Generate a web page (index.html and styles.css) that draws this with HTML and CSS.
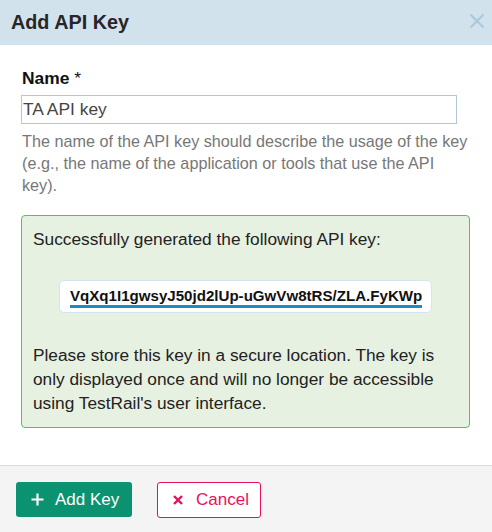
FILE: index.html
```html
<!DOCTYPE html>
<html>
<head>
<meta charset="utf-8">
<link rel="stylesheet" href="styles.css">
</head>
<body>
<div class="dialog">
  <div class="header">
    <h1 class="title">Add API Key</h1>
    <span class="close" aria-label="Close">
      <svg width="16" height="16" viewBox="0 0 16 16"><path d="M1.5 1.5 L14.5 14.5 M14.5 1.5 L1.5 14.5" stroke="#aac8dc" stroke-width="2" fill="none"/></svg>
    </span>
  </div>
  <div class="content">
    <label class="label">Name <span class="req">*</span></label>
    <div class="input">TA API key</div>
    <p class="help">The name of the API key should describe the usage of the key (e.g., the name of the application or tools that use the API key).</p>
    <div class="success">
      <p class="msg">Successfully generated the following API key:</p>
      <div class="keybox"><div class="keyfield"><span class="key">VqXq1I1gwsyJ50jd2lUp-uGwVw8tRS/ZLA.FyKWpTx9</span></div></div>
      <p class="msg">Please store this key in a secure location. The key is only displayed once and will no longer be accessible using TestRail's user interface.</p>
    </div>
  </div>
  <div class="footer">
    <button class="btn btn-add">
      <svg width="13" height="13" viewBox="0 0 13 13"><path d="M6.5 0.5 V12.5 M0.5 6.5 H12.5" stroke="#fff" stroke-width="2.2" fill="none"/></svg>
      <span>Add Key</span>
    </button>
    <button class="btn btn-cancel">
      <svg width="10" height="10" viewBox="0 0 10 10"><path d="M1 1 L9 9 M9 1 L1 9" stroke="#e5115c" stroke-width="2.4" fill="none"/></svg>
      <span>Cancel</span>
    </button>
  </div>
</div>
</body>
</html>
```

FILE: styles.css
```css
* { box-sizing: border-box; }
html, body { margin: 0; padding: 0; background: #fff; }
body {
  font-family: "Liberation Sans", Arial, sans-serif;
  color: #222;
  width: 492px;
  height: 532px;
  overflow: hidden;
}
.dialog {
  display: flex;
  flex-direction: column;
  height: 532px;
}
.header {
  height: 45px;
  background: #d2e2ed;
  display: flex;
  align-items: center;
  justify-content: space-between;
  padding: 0 7px 1px 11px;
}
.title {
  margin: 0;
  font-size: 19.8px;
  font-weight: bold;
  color: #262626;
}
.close { display: flex; width: 16px; height: 16px; margin-top: -2px; }
.content {
  flex: 1;
  padding: 22px 22px 0 22px;
}
.label {
  display: block;
  font-weight: bold;
  font-size: 17.4px;
  line-height: 22px;
  color: #111;
}
.req { font-weight: normal; }
.input {
  margin: 6px 13px 0 -1px;
  height: 29px;
  border: 1px solid #b2c8d6;
  font-size: 17.4px;
  line-height: 27px;
  padding: 0 0 0 1px;
  color: #444;
}
.help {
  margin: 6px 0 0 0;
  font-size: 16.2px;
  line-height: 22px;
  color: #777;
}
.success {
  margin: 19px 0 0 -1px;
  border: 1px solid #57c058;
  border-radius: 4px;
  background: #e7f1e1;
  padding: 11px 11px 12px 11px;
}
.msg {
  margin: 0;
  font-size: 17.3px;
  line-height: 24px;
  color: #222;
}
.keybox {
  margin: 29px auto 30px auto;
  width: 373px;
  height: 33px;
  background: #fff;
  border: 1px solid #d6e4ee;
  border-radius: 5px;
  padding: 6px 10px 0 10px;
}
.keyfield {
  width: 352px;
  overflow: hidden;
  white-space: nowrap;
  border-bottom: 3px solid #1f8bc0;
}
.key {
  display: block;
  font-weight: bold;
  font-size: 15.1px;
  line-height: 18px;
  color: #111;
}
.footer {
  height: 67px;
  border-top: 1px solid #dcdcdc;
  background: #f4f4f4;
  display: flex;
  align-items: flex-start;
  padding: 16px 0 0 16px;
  gap: 25px;
}
.btn {
  display: flex;
  align-items: center;
  height: 35px;
  border-radius: 3px;
  font-family: "Liberation Sans", Arial, sans-serif;
  font-size: 17px;
  cursor: pointer;
}
.btn-add {
  width: 116px;
  background: #0b9371;
  border: none;
  color: #fff;
  padding: 0 0 0 15px;
  gap: 11px;
}
.btn-cancel {
  width: 104px;
  height: 36px;
  background: #fff;
  border: 1px solid #e5115c;
  color: #e5115c;
  padding: 0 0 0 15px;
  gap: 13px;
}
```
